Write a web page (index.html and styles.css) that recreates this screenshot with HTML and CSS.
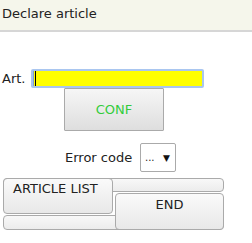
FILE: index.html
```html
<!DOCTYPE html>
<html lang="en">
<head>
    <title>Declare article</title>
    <link rel="stylesheet" href="styles.css">
</head>
<body>
    <!-- header -->
    <div class="header">Declare article</div>

    <form class="declare-form" onsubmit="return false">
        <div class="art-row">
            <label for="art">Art.</label>
            <input type="text" id="art" name="art" class="art-input">
        </div>
        <div class="conf-row">
            <button type="button" class="conf-btn">CONF</button>
        </div>
        <div class="error-row">
            <span class="error-label">Error code</span>
            <div class="fake-select"><span>...</span><span class="arrow">&#9660;</span></div>
        </div>
        <!-- bottom buttons -->
        <div class="bottom-grid">
            <div class="bar bar-top"></div>
            <div class="bar bar-bottom"></div>
            <button type="button" class="grid-btn list-btn">ARTICLE LIST</button>
            <button type="button" class="grid-btn end-btn">END</button>
        </div>
    </form>
</body>
</html>
```

FILE: styles.css
```css
body {
    font-family: "DejaVu Sans", Verdana, sans-serif;
    font-size: 13px;
    color: #222;
    background-color: #fff;
    margin: 0;
    padding: 0;
}

.header {
    height: 30px;
    line-height: 28px;
    padding-left: 2px;
    background-color: #f5f6eb;
    border-bottom: 2px solid #d6d6d6;
    color: #222;
}

.declare-form {
    margin: 0;
    padding-top: 37px;
}

.art-row {
    display: flex;
    align-items: center;
    padding-left: 2px;
    height: 19px;
}

.art-row label {
    width: 29px;
    color: #222;
}

.art-input {
    box-sizing: border-box;
    width: 173px;
    height: 19px;
    margin: 0;
    padding: 0 2px;
    border: 2px solid #a9c6f0;
    border-radius: 2px;
    background-color: #ffff00;
    outline: none;
    box-shadow: inset 1px 0 0 #7f9fd0, inset 2px 0 0 #ffff00, inset 3px 0 0 #000;
}

.conf-row {
    padding-left: 64px;
}

.conf-btn {
    box-sizing: border-box;
    width: 100px;
    height: 43px;
    margin: 0;
    border: 1px solid #aaa;
    border-radius: 1px;
    background: linear-gradient(#f6f6f6, #dedede);
    color: #33cc3c;
    font-family: "DejaVu Sans", Verdana, sans-serif;
    font-size: 13px;
    padding: 0;
}

.error-row {
    display: flex;
    align-items: center;
    margin-top: 12px;
    padding-left: 65px;
    height: 29px;
}

.error-label {
    width: 75px;
}

.fake-select {
    box-sizing: border-box;
    width: 36px;
    height: 29px;
    border: 1px solid #aaa;
    border-radius: 2px;
    display: flex;
    align-items: center;
    justify-content: space-between;
    padding: 0 5px 0 4px;
    font-size: 10px;
}

.fake-select .arrow {
    font-size: 9px;
    color: #111;
}

.bottom-grid {
    display: grid;
    grid-template-columns: 110px 111px;
    grid-template-rows: 15px 22px 15px;
    margin: 6px 0 0 3px;
    width: 221px;
}

.bar {
    border: 1px solid #aaa;
    border-radius: 4px;
    background: linear-gradient(#f8f8f8, #ececec);
    box-sizing: border-box;
}

.bar-top {
    grid-column: 1 / 3;
    grid-row: 1;
    height: 14px;
}

.bar-bottom {
    grid-column: 1 / 3;
    grid-row: 3;
}

.grid-btn {
    box-sizing: border-box;
    margin: 0;
    border: 1px solid #aaa;
    border-radius: 4px;
    background: linear-gradient(#fafafa, #e8e8e8);
    color: #222;
    font-family: "DejaVu Sans", Verdana, sans-serif;
    font-size: 13px;
    z-index: 1;
}

.list-btn {
    grid-column: 1;
    grid-row: 1 / 3;
    height: 36px;
    text-align: left;
    padding: 2px 0 0 9px;
    align-self: start;
    display: flex;
    align-items: flex-start;
}

.end-btn {
    grid-column: 2;
    grid-row: 2 / 4;
    margin-left: 2px;
    padding: 3px 0 0 0;
    display: flex;
    justify-content: center;
    align-items: flex-start;
}
```
